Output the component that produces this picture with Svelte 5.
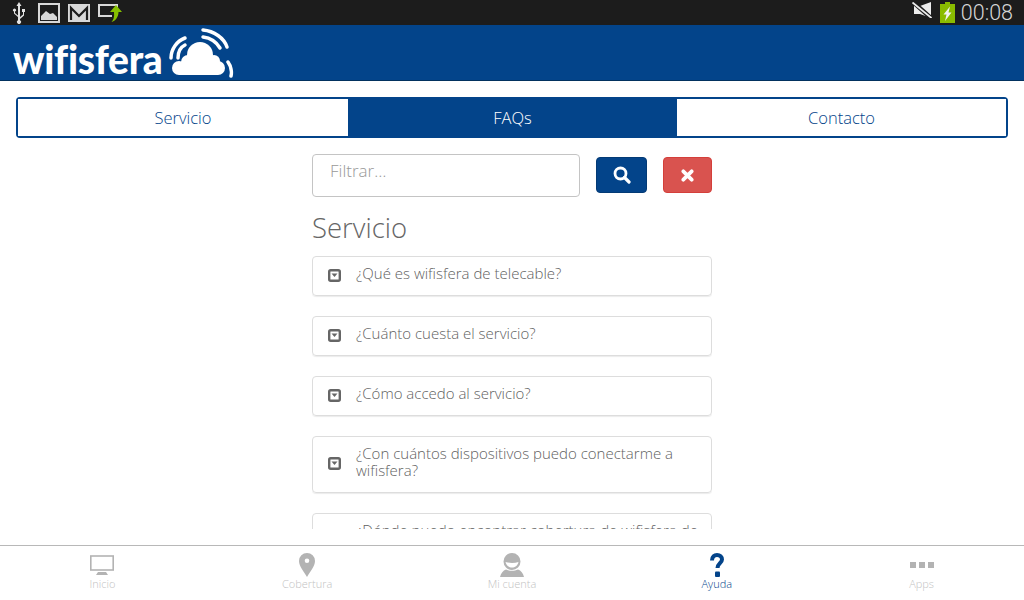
<script>
  const faqs = [
    '¿Qué es wifisfera de telecable?',
    '¿Cuánto cuesta el servicio?',
    '¿Cómo accedo al servicio?',
    '¿Con cuántos dispositivos puedo conectarme a wifisfera?',
    '¿Dónde puedo encontrar cobertura de wifisfera de telecable?'
  ];
  const tabs = ['Servicio', 'FAQs', 'Contacto'];
  let active = $state('FAQs');
  let filter = $state('');
</script>

<div class="screen">
  <div class="status">
    <div class="status-left">
      <svg width="14" height="22" viewBox="0 0 14 22">
        <path d="M7 0l2.500 4H8v11l3-2.500V10h-1V7h3v3h-1v3.500L8 17v1.200a2 2 0 1 1-2 0V15L2 11.500V9.500a1.500 1.500 0 1 1 1 0V11l3 2.500V4H4.500z" fill="#e4e4e4"/>
      </svg>
      <svg width="22" height="20" viewBox="0 0 22 20" class="pic">
        <rect x="1" y="1" width="20" height="18" fill="none" stroke="#d8d8d8" stroke-width="2"/>
        <path d="M3 17v-4l5-5 4 3 3-1 4 4v3z" fill="#d8d8d8"/>
      </svg>
      <svg width="22" height="18" viewBox="0 0 22 18">
        <rect width="22" height="18" fill="#d8d8d8"/>
        <path d="M3 16V4l8 8 8-8v12" fill="none" stroke="#1c1c1c" stroke-width="2.200"/>
      </svg>
      <svg width="24" height="20" viewBox="0 0 24 20">
        <path d="M14 13H1V2h18v3" fill="none" stroke="#d8d8d8" stroke-width="2"/>
        <path d="M18 2l6 7h-3.500c0 5-3 9-7 10 2-2 3-5 2.500-10H12z" fill="#86c000"/>
      </svg>
    </div>
    <div class="status-right">
      <svg width="20" height="16" viewBox="0 0 20 16" class="mute">
        <path d="M2 4h6l11-4v16L8 12H2z" fill="#ececec"/>
        <path d="M1 0l18 16" stroke="#1c1c1c" stroke-width="4.500"/>
        <path d="M0.500 0.500l19 15.500" stroke="#ececec" stroke-width="1.800"/>
      </svg>
      <svg width="15" height="21" viewBox="0 0 15 21" class="battery">
        <path d="M5 0h5v2h5v19H0V2h5z" fill="#8abc00"/>
        <path d="M10 4.500L3.500 12.500h3L5 19l6.500-8.500h-3z" fill="#f2f2f2"/>
      </svg>
      <span class="clock">00:08</span>
    </div>
  </div>

  <header class="brand">
    <span class="logo-text">wifisfera</span>
    <svg width="68" height="52" viewBox="0 0 68 52" class="logo-cloud">
      <g fill="#fff">
        <circle cx="11" cy="42" r="7"/>
        <circle cx="20" cy="36" r="7"/>
        <circle cx="32" cy="29" r="13"/>
        <circle cx="46" cy="35" r="6"/>
        <circle cx="50" cy="42" r="7"/>
        <rect x="11" y="36" width="39" height="13"/>
      </g>
      <g fill="none" stroke="#fff" stroke-width="3.500" stroke-linecap="round">
        <path d="M3 32C3 23 9 15 17 12"/>
        <path d="M10 32C10 26 13 21 17 19"/>
        <path d="M35 4C46 5 56 12 59 21"/>
        <path d="M35 11C43 12 49 17 52 22"/>
        <path d="M60 36C63 40 64 46 63 50"/>
      </g>
    </svg>
  </header>

  <main class="content">
    <nav class="tabs">
      {#each tabs as t}
        <button class="tab" class:active={active === t} onclick={() => (active = t)}>{t}</button>
      {/each}
    </nav>

    <div class="column">
      <div class="search-row">
        <input class="search" placeholder="Filtrar…" bind:value={filter} />
        <button class="btn btn-blue" aria-label="Buscar">
          <svg width="18" height="18" viewBox="0 0 18 18">
            <circle cx="7.500" cy="7.500" r="5.500" fill="none" stroke="#fff" stroke-width="2.800"/>
            <path d="M11.500 11.500l4.500 4.500" stroke="#fff" stroke-width="3.200" stroke-linecap="round"/>
          </svg>
        </button>
        <button class="btn btn-red" aria-label="Borrar">
          <svg width="13" height="13" viewBox="0 0 14 14">
            <path d="M2.500 2.500l9 9M11.500 2.500l-9 9" stroke="#fff" stroke-width="4" stroke-linecap="round"/>
          </svg>
        </button>
      </div>

      <h2 class="section-title">Servicio</h2>

      <div class="faq-list">
        {#each faqs as q}
          <div class="faq">
            <svg width="13" height="13" viewBox="0 0 13 13" class="caret">
              <rect x="1.200" y="1.200" width="10.600" height="10.600" rx="1.500" fill="none" stroke="#666" stroke-width="2.400"/>
              <path d="M3.500 4.500h6l-3 3.500z" fill="#666"/>
            </svg>
            <span>{q}</span>
          </div>
        {/each}
      </div>
    </div>
  </main>

  <footer class="bottom-nav">
    <div class="nav-item">
      <svg width="26" height="24" viewBox="0 0 26 24">
        <rect x="1.800" y="3" width="22.400" height="14" fill="none" stroke="#b3b3b3" stroke-width="1.600"/>
        <path d="M7 22l2-3h8l2 3z" fill="#b3b3b3"/>
      </svg>
      <span>Inicio</span>
    </div>
    <div class="nav-item">
      <svg width="16" height="24" viewBox="0 0 16 24">
        <path fill-rule="evenodd" d="M8 0a8 8 0 0 1 8 8c0 5-5 11-8 16C5 19 0 13 0 8a8 8 0 0 1 8-8zm0 5.500a2.300 2.300 0 1 0 0 4.600 2.300 2.300 0 0 0 0-4.600z" fill="#b3b3b3"/>
      </svg>
      <span>Cobertura</span>
    </div>
    <div class="nav-item">
      <svg width="24" height="24" viewBox="0 0 24 24">
        <path fill-rule="evenodd" d="M12 0a8.500 8.500 0 0 1 8.500 8.500 8.500 8.500 0 0 1-17 0A8.500 8.500 0 0 1 12 0zM5.500 9c1 4 3.500 5.500 6.500 5.500S17.500 13 18.500 9c-4 1.200-9 1.200-13 0z" fill="#b3b3b3"/>
        <path d="M0 24c1-4 3-6.500 6-7.500 3.500 1.800 8.500 1.800 12 0 3 1 5 3.500 6 7.500z" fill="#b3b3b3"/>
      </svg>
      <span>Mi cuenta</span>
    </div>
    <div class="nav-item current">
      <svg width="14" height="24" viewBox="0 0 14 24">
        <path d="M2 7.500C2 3.500 4.500 2 7 2c3 0 5 2 5 4.500 0 3.500-4.500 4-4.500 8.500" fill="none" stroke="#03448a" stroke-width="4"/>
        <rect x="5" y="18.500" width="5" height="5.500" rx="1" fill="#03448a"/>
      </svg>
      <span>Ayuda</span>
    </div>
    <div class="nav-item">
      <svg width="24" height="24" viewBox="0 0 24 24">
        <path d="M0 9h6v6H0zM9 9h6v6H9zM18 9h6v6h-6z" fill="#b3b3b3"/>
      </svg>
      <span>Apps</span>
    </div>
  </footer>
</div>

<style>
  :global(body) {
    margin: 0;
    background: #fff;
  }

  .screen {
    width: 1024px;
    height: 600px;
    display: flex;
    flex-direction: column;
    overflow: hidden;
    font-family: "Open Sans", "Liberation Sans", sans-serif;
    font-weight: 300;
    color: #5f5f5f;
  }

  .status {
    height: 25px;
    flex: none;
    background: #1c1c1c;
    display: flex;
    justify-content: space-between;
    align-items: center;
  }

  .status-left {
    display: flex;
    align-items: center;
    gap: 8px;
    padding-left: 12px;
  }

  .pic {
    margin-left: 4px;
  }

  .status-right {
    display: flex;
    align-items: center;
    gap: 6px;
    padding-right: 11px;
  }

  .mute {
    margin-bottom: 5px;
    margin-right: 2px;
  }

  .battery {
    margin-left: 0;
  }

  .clock {
    font-family: "Roboto", sans-serif;
    font-size: 21.500px;
    font-weight: 300;
    color: #d6d6d6;
  }

  .brand {
    height: 56px;
    box-sizing: border-box;
    flex: none;
    background: #03448a;
    border-bottom: 1px solid #02325f;
    display: flex;
    align-items: flex-end;
    padding-left: 13px;
  }

  .logo-text {
    font-family: "Lato", sans-serif;
    font-weight: 900;
    font-size: 39px;
    line-height: 39px;
    color: #fff;
    margin-bottom: 1px;
    letter-spacing: -0.3px;
  }

  .logo-cloud {
    margin-left: 5px;
    margin-bottom: 2px;
  }

  .content {
    flex: 1;
    min-height: 0;
    padding: 16px;
    display: flex;
    flex-direction: column;
    overflow: hidden;
  }

  .tabs {
    display: grid;
    grid-template-columns: 330px 329px 1fr;
    height: 41px;
    flex: none;
    box-sizing: border-box;
    border: 2px solid #03448a;
    border-radius: 4px;
  }

  .tab {
    border: none;
    background: #fff;
    color: #03448a;
    font: inherit;
    font-size: 16.500px;
    padding: 0 0 1px;
  }

  .tab.active {
    background: #03448a;
    color: #fff;
  }

  .column {
    width: 400px;
    margin: 16px auto 0;
    flex: 1;
    min-height: 0;
    display: flex;
    flex-direction: column;
    overflow: hidden;
  }

  .search-row {
    display: flex;
    align-items: flex-start;
    flex: none;
  }

  .search {
    width: 268px;
    height: 43px;
    box-sizing: border-box;
    border: 1px solid #c4c4c4;
    border-radius: 4px;
    padding: 0 17px 11px;
    font: inherit;
    font-size: 17px;
    outline: none;
  }

  .search::placeholder {
    color: #999;
  }

  .btn {
    height: 36px;
    margin-top: 3px;
    border-radius: 4px;
    display: flex;
    align-items: center;
    justify-content: center;
    padding: 0;
  }

  .btn-blue {
    width: 51px;
    margin-left: 16px;
    background: #03448a;
    border: 1px solid #033a75;
  }

  .btn-red {
    width: 49px;
    margin-left: 16px;
    background: #d9534f;
    border: 1px solid #d43f3a;
  }

  .section-title {
    font-size: 27.500px;
    font-weight: 300;
    line-height: 36px;
    margin: 13px 0 10px;
    color: #666;
    flex: none;
  }

  .faq-list {
    display: flex;
    flex-direction: column;
    gap: 20px;
    flex: none;
  }

  .faq {
    display: flex;
    align-items: center;
    gap: 15px;
    box-sizing: border-box;
    padding: 8px 10px 13px 15px;
    border: 1px solid #ddd;
    border-radius: 4px;
    box-shadow: 0 1px 1px rgba(0, 0, 0, 0.08);
    font-size: 15px;
    line-height: 17px;
  }

  .caret {
    flex: none;
    margin-top: 3px;
  }

  .bottom-nav {
    height: 55px;
    box-sizing: border-box;
    flex: none;
    border-top: 1px solid #b8b8b8;
    display: grid;
    grid-template-columns: repeat(5, 1fr);
    background: #fff;
  }

  .nav-item {
    display: flex;
    flex-direction: column;
    align-items: center;
    padding-top: 7px;
    font-size: 11px;
    line-height: 13px;
    color: #c2c2c2;
  }

  .nav-item.current {
    color: #03448a;
  }
</style>
